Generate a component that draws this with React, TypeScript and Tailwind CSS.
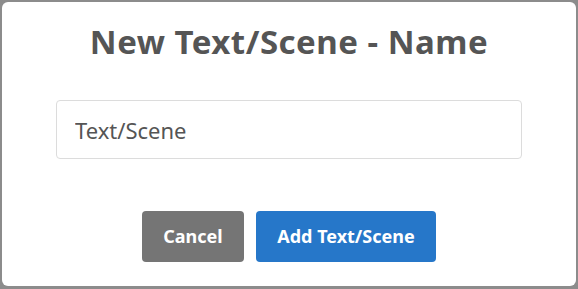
export default function App() {
  return (
    <div className="w-[578px] h-[289px] bg-[#8c8c8c] p-[2px] pb-[3px]" style={{ fontFamily: '"Noto Sans", "Open Sans", sans-serif' }}>
      <div className="h-full bg-white rounded-md flex flex-col items-center">
        <h2 className="mt-[20px] text-[33px] leading-[40px] tracking-[0.5px] font-bold text-[#555]">New Text/Scene - Name</h2>
        <input
          defaultValue="Text/Scene"
          className="mt-[38px] w-[466px] h-[59px] border border-[#dcdcdc] rounded px-[18px] text-[22px] text-[#555] outline-none"
        />
        <div className="mt-[52px] flex gap-3">
          <button className="w-[102px] h-[51px] rounded bg-[#757575] text-white text-[18px] font-bold">Cancel</button>
          <button className="w-[180px] h-[51px] rounded bg-[#2677c9] text-white text-[18px] font-bold">Add Text/Scene</button>
        </div>
      </div>
    </div>
  )
}
